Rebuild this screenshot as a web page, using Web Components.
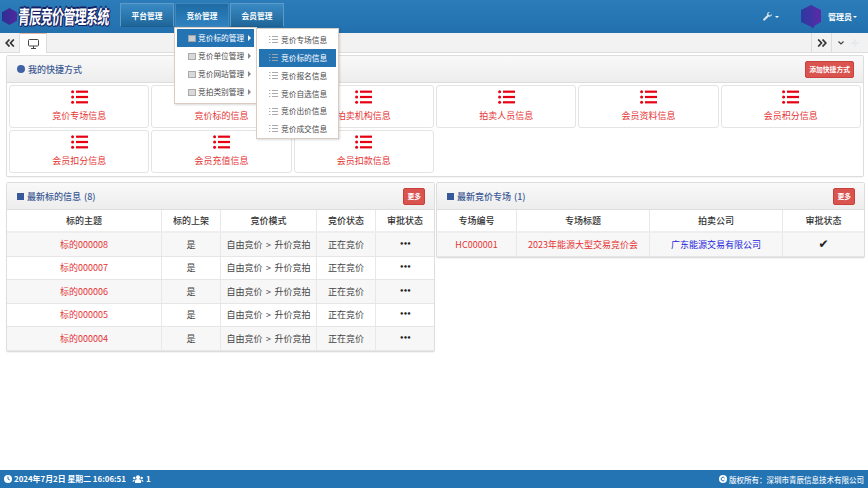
<!DOCTYPE html>
<html lang="zh">
<head>
<meta charset="utf-8">
<title>青辰竞价管理系统</title>
<style>
  html, body { margin: 0; height: 100%; background: #fff; }
  body { font: 9px/1.2 "Noto Sans CJK SC", "Liberation Sans", sans-serif; color: #444; }
</style>
</head>
<body>
<admin-shell>
  <top-bar slot="top">
    <nav-tab>平台管理</nav-tab>
    <nav-tab active>
      竞价管理
      <fly-menu slot="menu" class="main">
        <menu-row icon="box" arrow active>竞价标的管理</menu-row>
        <menu-row icon="box" arrow>竞价单位管理</menu-row>
        <menu-row icon="box" arrow>竞价网站管理</menu-row>
        <menu-row icon="box" arrow>竞拍类别管理</menu-row>
      </fly-menu>
      <fly-menu slot="menu" sub>
        <menu-row icon="list">竞价专场信息</menu-row>
        <menu-row icon="list" active>竞价标的信息</menu-row>
        <menu-row icon="list">竞价报名信息</menu-row>
        <menu-row icon="list">竞价自选信息</menu-row>
        <menu-row icon="list">竞价出价信息</menu-row>
        <menu-row icon="list">竞价成交信息</menu-row>
      </fly-menu>
    </nav-tab>
    <nav-tab>会员管理</nav-tab>
  </top-bar>
  <tab-strip slot="top"></tab-strip>

  <info-panel wide marker="dot" action="添加快捷方式">
    <span slot="title">我的快捷方式</span>
    <shortcut-grid>
      <quick-card>竞价专场信息</quick-card>
      <quick-card>竞价标的信息</quick-card>
      <quick-card>拍卖机构信息</quick-card>
      <quick-card>拍卖人员信息</quick-card>
      <quick-card>会员资料信息</quick-card>
      <quick-card>会员积分信息</quick-card>
      <quick-card>会员扣分信息</quick-card>
      <quick-card>会员充值信息</quick-card>
      <quick-card>会员扣款信息</quick-card>
    </shortcut-grid>
  </info-panel>

  <panel-pair>
    <info-panel marker="square" action="更多">
      <span slot="title">最新标的信息 (8)</span>
      <data-rows style="--cols: 155px 59px 96px 59px 1fr">
        <data-row head><span>标的主题</span><span>标的上架</span><span>竞价模式</span><span>竞价状态</span><span>审批状态</span></data-row>
        <data-row striped><em>标的000008</em><span>是</span><span>自由竞价 &gt; 升价竞拍</span><span>正在竞价</span><b>•••</b></data-row>
        <data-row><em>标的000007</em><span>是</span><span>自由竞价 &gt; 升价竞拍</span><span>正在竞价</span><b>•••</b></data-row>
        <data-row striped><em>标的000006</em><span>是</span><span>自由竞价 &gt; 升价竞拍</span><span>正在竞价</span><b>•••</b></data-row>
        <data-row><em>标的000005</em><span>是</span><span>自由竞价 &gt; 升价竞拍</span><span>正在竞价</span><b>•••</b></data-row>
        <data-row striped><em>标的000004</em><span>是</span><span>自由竞价 &gt; 升价竞拍</span><span>正在竞价</span><b>•••</b></data-row>
      </data-rows>
    </info-panel>
    <info-panel marker="square" action="更多">
      <span slot="title">最新竞价专场 (1)</span>
      <data-rows style="--cols: 80px 133px 133px 1fr">
        <data-row head><span>专场编号</span><span>专场标题</span><span>拍卖公司</span><span>审批状态</span></data-row>
        <data-row striped><em>HC000001</em><em>2023年能源大型交易竞价会</em><u>广东能源交易有限公司</u><b class="tick">✔</b></data-row>
      </data-rows>
    </info-panel>
  </panel-pair>

  <status-bar slot="bottom"></status-bar>
</admin-shell>

<script>
// small helper, every element gets its own open shadow root
function shadow(el, html) {
  el.attachShadow({ mode: "open" }).innerHTML = html;
}

const LIST_ICON = `<svg viewBox="0 0 17 14" width="17" height="14" fill="currentColor">
  <circle cx="1.6" cy="1.7" r="1.5"/><circle cx="1.6" cy="7" r="1.5"/><circle cx="1.6" cy="12.3" r="1.5"/>
  <rect x="5" y=".6" width="12" height="2.2"/><rect x="5" y="5.9" width="12" height="2.2"/><rect x="5" y="11.2" width="12" height="2.2"/>
</svg>`;

const CHEVRONS = d => `<svg width="10" height="8" viewBox="0 0 10 8" fill="none" stroke="#333" stroke-width="1.7" transform="${d}"><path d="M4.500.500 1.200 4l3.300 3.500M8.800.500 5.500 4l3.300 3.500"/></svg>`;

class AdminShell extends HTMLElement {
  constructor() {
    super();
    shadow(this, `<style>
      :host { display: flex; flex-direction: column; height: 100vh; overflow: hidden; }
      main { flex: 1; padding: 2px 4px 0 6px; display: flex; flex-direction: column; gap: 5px; }
    </style>
    <slot name="top"></slot>
    <main><slot></slot></main>
    <slot name="bottom"></slot>`);
  }
}

class TopBar extends HTMLElement {
  constructor() {
    super();
    shadow(this, `<style>
      :host { display: flex; height: 33px; flex: none; background: linear-gradient(#2b7cb9, #2271ae); color: #fff; position: relative; z-index: 5; }
      .logo { width: 120px; display: flex; align-items: center; padding-left: 2px; box-sizing: border-box; gap: 1px; flex: none; }
      .title { font-size: 12px; font-weight: 700; letter-spacing: -.65px; white-space: nowrap; color: #fff;
        transform: scaleY(1.6) skewX(-6deg); transform-origin: left center;
        text-shadow: 1px 0 0 #141e63, -1px 0 0 #141e63, 0 1px 0 #141e63, 0 -1px 0 #141e63, 1px 1px 0 #141e63; }
      nav { display: flex; gap: 1px; padding-top: 3px; height: 24px; }
      .tools { margin-left: auto; display: flex; align-items: center; padding-right: 11px; }
      .tool { display: flex; align-items: center; gap: 3px; margin-right: 22px; color: #d6e4ef; }
      .caret { width: 0; height: 0; border: 2px solid transparent; border-top: 2px solid #fff; border-bottom: 0; }
      .user { display: flex; align-items: center; gap: 1px; font-size: 8px; font-weight: 700; }
      .user svg { margin-right: 6px; }
    </style>
    <div class="logo">
      <svg width="15" height="17" viewBox="0 0 15 17"><defs><linearGradient id="l" x1="0" x2="1"><stop offset="0" stop-color="#2c2f93"/><stop offset="1" stop-color="#4f2aa0"/></linearGradient></defs><path d="M7.5 0 15 4.2v8.6L7.5 17 0 12.8V4.2z" fill="url(#l)"/></svg>
      <span class="title">青辰竞价管理系统</span>
    </div>
    <nav><slot></slot></nav>
    <div class="tools">
      <span class="tool">
        <svg width="9" height="9" viewBox="0 0 9 9" fill="#dbe6ee"><path d="M8.8 1.9 7.2 3.4 5.7 3 5.3 1.6 6.9.1C5.6-.3 4.2.6 4.1 2c0 .4 0 .7.2 1L.3 7a1 1 0 0 0 1.4 1.4L5.8 4.500c1.600.6 3.400-.8 3-2.600z"/></svg>
        <span class="caret"></span>
      </span>
      <span class="user">
        <svg width="20" height="24" viewBox="0 0 20 24"><defs><linearGradient id="a" x1="0" x2="1"><stop offset="0" stop-color="#2a3aa0"/><stop offset="1" stop-color="#5a2aa8"/></linearGradient></defs><path d="M10 0 20 5v12l-6 3.500-2 3-2-1.800L0 17V5z" fill="url(#a)"/></svg>
        管理员<span class="caret"></span>
      </span>
    </div>`);
  }
}

class NavTab extends HTMLElement {
  constructor() {
    super();
    shadow(this, `<style>
      :host { display: block; position: relative; width: 54px; height: 24px; box-sizing: border-box;
        border: 1px solid #5e9ac6; border-bottom-color: #1d5e8e; background: linear-gradient(#3a8ac5, #1f6698); }
      :host([active]) { background: linear-gradient(#1f6ba4, #2f82bf); border-color: #3f87bb; }
      .label { display: block; text-align: center; line-height: 23px; font-weight: 700; font-size: 7.700px; color: #fff; white-space: nowrap; }
    </style>
    <span class="label"><slot></slot></span>
    <slot name="menu"></slot>`);
  }
}

class FlyMenu extends HTMLElement {
  constructor() {
    super();
    shadow(this, `<style>
      :host { position: absolute; left: -2px; top: 23px; width: 83px; box-sizing: border-box; padding: 1px 2px 2px;
        background: #fff; border: 1px solid #d9cdc3; box-shadow: 1px 1px 2px rgba(0,0,0,.15); z-index: 6; }
      :host([sub]) { left: 80px; top: 24px; padding: 2px; height: 111px; }
    </style><slot></slot>`);
  }
}

class MenuRow extends HTMLElement {
  constructor() {
    super();
    const icon = this.getAttribute("icon") === "box"
      ? `<svg width="8" height="7" viewBox="0 0 8 7"><rect x=".5" y=".5" width="7" height="6" fill="#d9d9d9" stroke="#aaa"/></svg>`
      : `<svg width="9" height="7" viewBox="0 0 9 7" fill="#aaa"><rect width="1.400" height="1"/><rect y="3" width="1.400" height="1"/><rect y="6" width="1.400" height="1"/><rect x="3" width="6" height="1"/><rect x="3" y="3" width="6" height="1"/><rect x="3" y="6" width="6" height="1"/></svg>`;
    shadow(this, `<style>
      :host { display: flex; align-items: center; gap: 2px; height: 18px; padding-left: 11px; color: #4a4a4a; font-size: 7.700px; white-space: nowrap; position: relative; }
      :host([icon="list"]) { height: 17.800px; padding-left: 10px; gap: 3px; }
      :host([active]) { background: #2473b3; color: #fff; }
      :host([active]) svg { opacity: .9; }
      .arrow { position: absolute; right: 3px; top: 6px; border-left: 3px solid #888; border-top: 3px solid transparent; border-bottom: 3px solid transparent; }
      :host([active]) .arrow { border-left-color: #fff; }
    </style>${icon}<slot></slot>${this.hasAttribute("arrow") ? '<i class="arrow"></i>' : ""}`);
  }
}

class TabStrip extends HTMLElement {
  constructor() {
    super();
    shadow(this, `<style>
      :host { display: flex; height: 20px; flex: none; background: #f2f2f2; border-bottom: 1px solid #ddd; box-sizing: border-box; color: #333; }
      .btn { width: 19px; display: flex; align-items: center; justify-content: center; border-right: 1px solid #ddd; }
      .tab { width: 26px; margin-bottom: -1px; background: #fff; border-top: 1px solid #e8b9a0; border-right: 1px solid #ddd; display: flex; align-items: center; justify-content: center; }
      .right { margin-left: auto; display: flex; align-items: center; height: 100%; }
      .right .btn { width: 19px; height: 100%; border-left: 1px solid #ddd; border-right: 1px solid #ddd; }
      .chev { width: 36px; display: flex; align-items: center; gap: 7px; padding-left: 6px; box-sizing: border-box; }
    </style>
    <span class="btn">${CHEVRONS("")}</span>
    <span class="tab"><svg width="11" height="10" viewBox="0 0 11 10" fill="none" stroke="#444"><rect x=".5" y=".5" width="10" height="6.500" rx="1"/><path d="M3 9.500h5M5.500 7v2"/></svg></span>
    <span class="right">
      <span class="btn">${CHEVRONS("scale(-1 1)")}</span>
      <span class="chev">
        <svg width="6" height="4" viewBox="0 0 6 4" fill="none" stroke="#444" stroke-width="1.200"><path d="M.5.500 3 3 5.500.500"/></svg>
        <svg width="8" height="8" viewBox="0 0 9 9" fill="#dfe5ea"><path d="M4.500 0 6 2H5v2h2V3l2 1.500L7 6V5H5v2h1L4.500 9 3 7h1V5H2v1L0 4.500 2 3v1h2V2H3z"/></svg>
      </span>
    </span>`);
  }
}

class InfoPanel extends HTMLElement {
  constructor() {
    super();
    const marker = this.getAttribute("marker") === "dot" ? "dot" : "square";
    const action = this.getAttribute("action");
    shadow(this, `<style>
      :host { display: block; box-sizing: border-box; background: #fff; border: 1px solid #ddd; box-shadow: 0 1px 1px rgba(0,0,0,.05); border-radius: 2px; flex: none; }
      header { height: 27px; box-sizing: border-box; display: flex; align-items: center; padding: 0 9px 0 10px; gap: 3px; background: linear-gradient(#f9f9f9, #ededed); border-bottom: 1px solid #ddd; color: #3c5a94; font-weight: 500; word-spacing: 1px; }
      .square { width: 7px; height: 7px; background: #37589a; }
      .dot { width: 8px; height: 8px; border-radius: 50%; background: #3f62a6; }
      slot[name="title"] { display: block; padding-top: 2px; }
      button { margin-left: auto; border: 1px solid #c9403c; background: #d9534f; color: #fff; font: 700 6.800px/1 "Noto Sans CJK SC", sans-serif; height: 17px; padding: 0 3px; border-radius: 2px; min-width: 21px; }
    </style>
    <header><i class="${marker}"></i><slot name="title"></slot><button>${action}</button></header>
    <slot></slot>`);
  }
}

class ShortcutGrid extends HTMLElement {
  constructor() {
    super();
    shadow(this, `<style>
      :host { display: grid; grid-template-columns: repeat(6, 1fr); gap: 2px; padding: 2px 2px 3px; }
    </style><slot></slot>`);
  }
}

class QuickCard extends HTMLElement {
  constructor() {
    super();
    shadow(this, `<style>
      :host { display: flex; flex-direction: column; align-items: center; height: 43px; box-sizing: border-box; border: 1px solid #e4e4e4; border-radius: 3px; color: #e53333; padding-top: 4px; gap: 4px; background: #fff; }
      svg { color: #e60012; flex: none; }
      span { line-height: 14px; margin-top: 1px; }
    </style>${LIST_ICON}<span><slot></slot></span>`);
  }
}

class PanelPair extends HTMLElement {
  constructor() {
    super();
    shadow(this, `<style>
      :host { display: grid; grid-template-columns: 429px 429px; gap: 1px; align-items: start; }
    </style><slot></slot>`);
  }
}

class DataRows extends HTMLElement {
  constructor() {
    super();
    shadow(this, `<style>:host { display: block; }</style><slot></slot>`);
  }
}

class DataRow extends HTMLElement {
  constructor() {
    super();
    shadow(this, `<style>
      :host { display: grid; grid-template-columns: var(--cols); height: 23.500px; box-sizing: border-box; border-bottom: 1px solid #e6e6e6; word-spacing: 1.500px; }
      :host([head]) { height: 23px; border-bottom: 2px solid #eee; color: #333; font-weight: 500; }
      :host([striped]) { background: #f7f7f7; }
      ::slotted(*) { display: flex; align-items: center; justify-content: center; padding-top: 2px; box-sizing: border-box; border-right: 1px solid #e8e8e8; font-style: normal; text-decoration: none; white-space: nowrap; }
      ::slotted(:last-child) { border-right: 0; }
      ::slotted(em) { color: #e53333; }
      ::slotted(u) { color: #2222dd; }
      ::slotted(b) { color: #222; font: 700 7px/1 "DejaVu Sans", sans-serif; letter-spacing: -.8px; padding-top: 0; }
      ::slotted(b.tick) { font-size: 12px; letter-spacing: 0; }
    </style><slot></slot>`);
  }
}

class StatusBar extends HTMLElement {
  constructor() {
    super();
    shadow(this, `<style>
      :host { display: flex; align-items: center; height: 18px; flex: none; background: #2473b3; color: #fff; padding: 0 4px; font-size: 7.900px; font-weight: 700; gap: 6px; box-sizing: border-box; }
      .item { display: flex; align-items: center; gap: 2px; }
      .copy { margin-left: auto; font-weight: 500; font-size: 7.500px; color: #eef5fa; display: flex; align-items: center; gap: 2px; padding-right: 0; }
    </style>
    <span class="item"><svg width="8" height="8" viewBox="0 0 8 8"><circle cx="4" cy="4" r="4" fill="#fff"/><path d="M4 1.500V4l1.800 1" stroke="#2473b3" fill="none"/></svg>2024年7月2日 星期二 16:06:51</span>
    <span class="item"><svg width="12" height="8" viewBox="0 0 11 8" fill="#fff"><circle cx="5.500" cy="2.200" r="2"/><path d="M2.500 8V6a3 2 0 0 1 6 0v2z"/><circle cx="1.800" cy="3" r="1.200"/><circle cx="9.200" cy="3" r="1.200"/><path d="M0 6.500V6a1.800 1.500 0 0 1 2-1l-.2 1.500zM11 6.500V6a1.800 1.500 0 0 0-2-1l.2 1.500z"/></svg>1</span>
    <span class="copy"><svg width="8" height="8" viewBox="0 0 8 8"><circle cx="4" cy="4" r="4" fill="#fff"/><path d="M5.500 3A1.800 1.800 0 1 0 5.500 5" stroke="#2473b3" fill="none"/></svg>版权所有：深圳市青辰信息技术有限公司</span>`);
  }
}

customElements.define("admin-shell", AdminShell);
customElements.define("top-bar", TopBar);
customElements.define("nav-tab", NavTab);
customElements.define("fly-menu", FlyMenu);
customElements.define("menu-row", MenuRow);
customElements.define("tab-strip", TabStrip);
customElements.define("info-panel", InfoPanel);
customElements.define("shortcut-grid", ShortcutGrid);
customElements.define("quick-card", QuickCard);
customElements.define("panel-pair", PanelPair);
customElements.define("data-rows", DataRows);
customElements.define("data-row", DataRow);
customElements.define("status-bar", StatusBar);
</script>
</body>
</html>
